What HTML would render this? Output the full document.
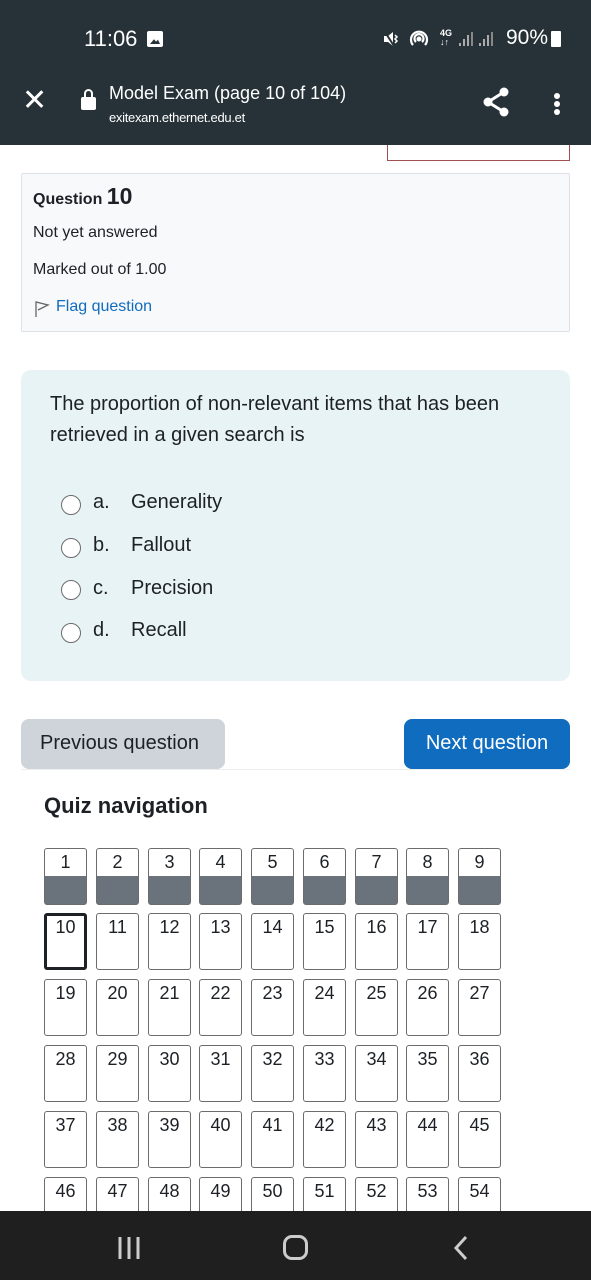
<!DOCTYPE html>
<html><head><meta charset="utf-8"><style>
*{margin:0;padding:0;box-sizing:border-box}
body{width:591px;height:1280px;position:relative;overflow:hidden;background:#fff;font-family:"Liberation Sans",sans-serif;color:#1d2125}
.a{position:absolute}
.top{left:0;top:0;width:591px;height:145px;background:#263238}
.nav{left:0;top:1211px;width:591px;height:69px;background:#1f1f1f}
.q{width:43px;height:57px;border:1px solid #6c6c6c;border-radius:3px;background:#fff;font-size:18px;text-align:center;line-height:26px;color:#1d2125;overflow:hidden}
.q.d{background:linear-gradient(#fff 0,#fff 27px,#6a737b 27px)}
.q.c{border:3px solid #1d2125;line-height:22px}
.r{width:20px;height:20px;border:1.5px solid #6c6c6c;border-radius:50%;background:#fff}
.opt{font-size:20px;color:#1d2125}
</style></head><body>
<div class="a top"></div>
<div class="a" style="left:84px;top:26px;color:#fff;font-size:22px">11:06</div>
<div class="a" style="left:147px;top:31px;width:16px;height:16px;background:#fff;border-radius:2px"><div class="a" style="left:3px;top:7px;width:10px;height:6px;background:#263238;clip-path:polygon(0 100%,40% 20%,60% 60%,80% 30%,100% 100%)"></div></div>
<svg class="a" style="left:382px;top:29px" width="20" height="20"><path d="M2 7H6L11 3V17L6 13H2Z" fill="#fff"/><path d="M13 6L15 8L13 10L15 12L13 14" stroke="#fff" stroke-width="1.5" fill="none"/><path d="M3 3L12 17" stroke="#263238" stroke-width="2"/></svg>
<svg class="a" style="left:407px;top:27px" width="24" height="24"><circle cx="12" cy="12" r="2.5" fill="#fff"/><path d="M6 18A8 8 0 1 1 18 18M9 15A4.5 4.5 0 1 1 15 15" stroke="#fff" stroke-width="2.2" fill="none"/></svg>
<div class="a" style="left:440px;top:29px;color:#fff;font-size:9px;line-height:9px;font-weight:bold">4G<br>↓↑</div>
<svg class="a" style="left:458px;top:31px" width="42" height="16"><g fill="#aaa"><rect x="1" y="12" width="2" height="3"/><rect x="5" y="8" width="2" height="7"/><rect x="9" y="4" width="2" height="11"/><rect x="13" y="1" width="2" height="14" fill="#888"/><rect x="21" y="12" width="2" height="3"/><rect x="25" y="8" width="2" height="7"/><rect x="29" y="4" width="2" height="11"/><rect x="33" y="1" width="2" height="14" fill="#888"/></g></svg>
<div class="a" style="left:506px;top:26px;color:#fff;font-size:21px">90%</div>
<div class="a" style="left:551px;top:31px;width:10px;height:16px;background:#fff;border-radius:1px"></div>
<div class="a" style="left:22px;top:86px;color:#fff;font-size:30px;line-height:30px">✕</div>
<div class="a" style="left:81px;top:97px;width:15px;height:13px;background:#fff;border-radius:2px"></div>
<div class="a" style="left:84px;top:89px;width:9px;height:12px;border:2px solid #fff;border-radius:5px 5px 0 0"></div>
<div class="a" style="left:109px;top:83px;color:#fff;font-size:18px">Model Exam (page 10 of 104)</div>
<div class="a" style="left:109px;top:110px;color:#fff;font-size:13px;letter-spacing:-0.3px">exitexam.ethernet.edu.et</div>
<svg class="a" style="left:480px;top:86px" width="32" height="32"><g fill="#fff"><circle cx="24" cy="6" r="4.5"/><circle cx="8" cy="16" r="4.5"/><circle cx="24" cy="26" r="4.5"/></g><path d="M24 6L8 16L24 26" stroke="#fff" stroke-width="3" fill="none"/></svg>
<svg class="a" style="left:551px;top:92px" width="12" height="26"><g fill="#fff"><circle cx="6" cy="4" r="3"/><circle cx="6" cy="12" r="3"/><circle cx="6" cy="20" r="3"/></g></svg>

<div class="a" style="left:387px;top:145px;width:183px;height:16px;border:1px solid #a05050;border-top:none"></div>
<div class="a" style="left:21px;top:173px;width:549px;height:159px;background:#f8f9fa;border:1px solid #dee2e6;border-radius:2px"></div>
<div class="a" style="left:33px;top:183px;font-size:16px;font-weight:bold">Question <span style="font-size:23px">10</span></div>
<div class="a" style="left:33px;top:224px;font-size:16px">Not yet answered</div>
<div class="a" style="left:33px;top:261px;font-size:16px">Marked out of 1.00</div>
<svg class="a" style="left:34px;top:300px" width="16" height="18"><path d="M2 17V2L14 5L4 10" stroke="#666" stroke-width="1.3" fill="none"/></svg>
<div class="a" style="left:56px;top:298px;font-size:16px;color:#0f6cbf">Flag question</div>

<div class="a" style="left:21px;top:370px;width:549px;height:311px;background:#e7f3f5;border-radius:10px"></div>
<div class="a" style="left:50px;top:389px;font-size:20px;line-height:31px;width:500px">The proportion of non-relevant items that has been retrieved in a given search is</div>
<div class="a r" style="left:61px;top:495px"></div><div class="a opt" style="left:93px;top:491px">a.</div><div class="a opt" style="left:131px;top:491px">Generality</div>
<div class="a r" style="left:61px;top:538px"></div><div class="a opt" style="left:93px;top:534px">b.</div><div class="a opt" style="left:131px;top:534px">Fallout</div>
<div class="a r" style="left:61px;top:580px"></div><div class="a opt" style="left:93px;top:577px">c.</div><div class="a opt" style="left:131px;top:577px">Precision</div>
<div class="a r" style="left:61px;top:623px"></div><div class="a opt" style="left:93px;top:619px">d.</div><div class="a opt" style="left:131px;top:619px">Recall</div>

<div class="a" style="left:21px;top:719px;width:204px;height:50px;background:#ced4da;border-radius:8px;font-size:20px;line-height:48px;padding-left:19px">Previous question</div>
<div class="a" style="left:404px;top:719px;width:166px;height:50px;background:#0f6cbf;border-radius:8px;font-size:20px;line-height:48px;color:#fff;text-align:center">Next question</div>
<div class="a" style="left:21px;top:769px;width:549px;height:1px;background:#eee"></div>
<div class="a" style="left:44px;top:793px;font-size:22px;font-weight:bold">Quiz navigation</div>

<div class="a q d" style="left:44px;top:848px">1</div><div class="a q d" style="left:96px;top:848px">2</div><div class="a q d" style="left:148px;top:848px">3</div><div class="a q d" style="left:199px;top:848px">4</div><div class="a q d" style="left:251px;top:848px">5</div><div class="a q d" style="left:303px;top:848px">6</div><div class="a q d" style="left:355px;top:848px">7</div><div class="a q d" style="left:406px;top:848px">8</div><div class="a q d" style="left:458px;top:848px">9</div>
<div class="a q c" style="left:44px;top:913px">10</div><div class="a q" style="left:96px;top:913px">11</div><div class="a q" style="left:148px;top:913px">12</div><div class="a q" style="left:199px;top:913px">13</div><div class="a q" style="left:251px;top:913px">14</div><div class="a q" style="left:303px;top:913px">15</div><div class="a q" style="left:355px;top:913px">16</div><div class="a q" style="left:406px;top:913px">17</div><div class="a q" style="left:458px;top:913px">18</div>
<div class="a q" style="left:44px;top:979px">19</div><div class="a q" style="left:96px;top:979px">20</div><div class="a q" style="left:148px;top:979px">21</div><div class="a q" style="left:199px;top:979px">22</div><div class="a q" style="left:251px;top:979px">23</div><div class="a q" style="left:303px;top:979px">24</div><div class="a q" style="left:355px;top:979px">25</div><div class="a q" style="left:406px;top:979px">26</div><div class="a q" style="left:458px;top:979px">27</div>
<div class="a q" style="left:44px;top:1045px">28</div><div class="a q" style="left:96px;top:1045px">29</div><div class="a q" style="left:148px;top:1045px">30</div><div class="a q" style="left:199px;top:1045px">31</div><div class="a q" style="left:251px;top:1045px">32</div><div class="a q" style="left:303px;top:1045px">33</div><div class="a q" style="left:355px;top:1045px">34</div><div class="a q" style="left:406px;top:1045px">35</div><div class="a q" style="left:458px;top:1045px">36</div>
<div class="a q" style="left:44px;top:1111px">37</div><div class="a q" style="left:96px;top:1111px">38</div><div class="a q" style="left:148px;top:1111px">39</div><div class="a q" style="left:199px;top:1111px">40</div><div class="a q" style="left:251px;top:1111px">41</div><div class="a q" style="left:303px;top:1111px">42</div><div class="a q" style="left:355px;top:1111px">43</div><div class="a q" style="left:406px;top:1111px">44</div><div class="a q" style="left:458px;top:1111px">45</div>
<div class="a q" style="left:44px;top:1177px">46</div><div class="a q" style="left:96px;top:1177px">47</div><div class="a q" style="left:148px;top:1177px">48</div><div class="a q" style="left:199px;top:1177px">49</div><div class="a q" style="left:251px;top:1177px">50</div><div class="a q" style="left:303px;top:1177px">51</div><div class="a q" style="left:355px;top:1177px">52</div><div class="a q" style="left:406px;top:1177px">53</div><div class="a q" style="left:458px;top:1177px">54</div>

<div class="a nav"></div>
<svg class="a" style="left:115px;top:1235px" width="30" height="26"><g stroke="#ccc" stroke-width="3"><path d="M5 2V24M14 2V24M23 2V24"/></g></svg>
<div class="a" style="left:283px;top:1235px;width:25px;height:25px;border:3px solid #ccc;border-radius:9px"></div>
<svg class="a" style="left:450px;top:1234px" width="22" height="28"><path d="M16 3L6 14L16 25" stroke="#ccc" stroke-width="3" fill="none"/></svg>
</body></html>
